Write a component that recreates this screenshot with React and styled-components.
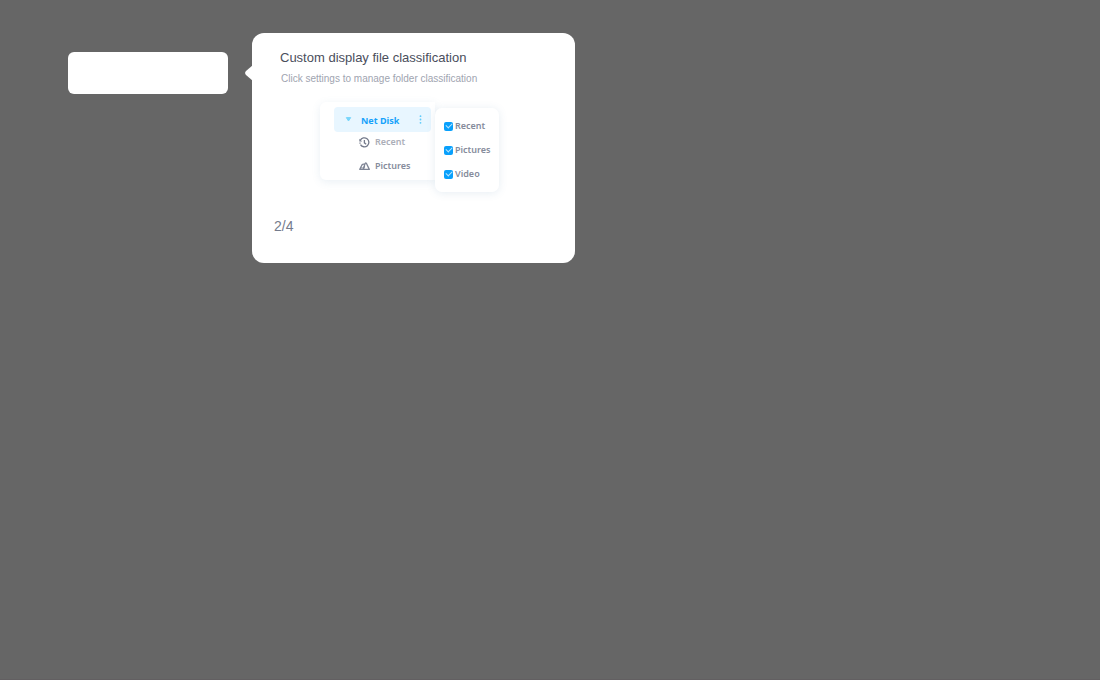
import React from "react";
import styled, { createGlobalStyle } from "styled-components";

const GlobalStyle = createGlobalStyle`
  * { box-sizing: border-box; }
  body {
    margin: 0;
    background: #666666;
    font-family: "Noto Sans", sans-serif;
  }
`;

const Overlay = styled.main`
  display: flex;
  align-items: flex-start;
  gap: 24px;
  min-height: 100vh;
  padding: 33px 24px 33px 68px;
  border-bottom: 1px solid #625f61;
`;

const Highlight = styled.div`
  flex: 0 1 160px;
  height: 42px;
  margin-top: 19px;
  border-radius: 6px;
  background: #ffffff;
`;

const Popover = styled.section`
  position: relative;
  flex: 0 1 323px;
  padding: 15px 20px 27px 22px;
  border-radius: 12px;
  background: #ffffff;
`;

const Arrow = styled.svg`
  position: absolute;
  top: 32px;
  left: -7px;
  width: 8px;
  height: 16px;
`;

const Title = styled.h1`
  margin: 0 0 0 6px;
  font: 400 13px/20px "Liberation Sans", sans-serif;
  color: #4a4e5c;
  white-space: nowrap;
`;

const Description = styled.p`
  margin: 2px 0 0 7px;
  font: 400 10px/18px "Liberation Sans", sans-serif;
  color: #a0a4b0;
  white-space: nowrap;
`;

const Preview = styled.div`
  display: flex;
  align-items: flex-start;
  margin: 14px 0 0 46px;
`;

const FolderPanel = styled.div`
  display: flex;
  flex-direction: column;
  flex: 0 0 115px;
  height: 78px;
  padding: 5px 4px 0 14px;
  border-radius: 6px 0 0 6px;
  background: #ffffff;
  box-shadow: 0 2px 8px rgba(80, 130, 170, 0.12);
`;

const FolderHeader = styled.div`
  display: flex;
  align-items: center;
  height: 25px;
  padding: 0 9px 0 11px;
  border-radius: 4px;
  background: #e8f6ff;
  color: #17a2fb;
  font-size: 9px;
  font-weight: 700;
`;

const FolderName = styled.span`
  flex: 1;
  margin-left: 9px;
  padding-top: 2px;
`;

const FolderRows = styled.div`
  display: grid;
  gap: 4px;
  padding-left: 25px;
`;

const FolderRow = styled.div`
  display: flex;
  align-items: center;
  gap: 5px;
  height: 20px;
  font-size: 9px;
  font-weight: 600;
  line-height: 12px;
  color: ${({ $muted }) => ($muted ? "#abaeb8" : "#858b9b")};
`;

const OptionMenu = styled.div`
  position: relative;
  display: grid;
  grid-auto-rows: 24px;
  height: 84px;
  flex: 0 0 64px;
  margin-top: 6px;
  padding: 6px 0 0 9px;
  border-radius: 7px;
  background: #ffffff;
  box-shadow: 0 1px 9px rgba(80, 130, 170, 0.14);
`;

const Option = styled.label`
  display: flex;
  align-items: center;
  gap: 2px;
  font-size: 9px;
  font-weight: 600;
  line-height: 12px;
  color: #858b9b;
`;

const Checkbox = styled.input`
  appearance: none;
  flex: none;
  display: grid;
  place-items: center;
  width: 9px;
  height: 9px;
  margin: 0;
  border-radius: 2px;
  background: #08a0fc;

  &:checked::before {
    content: "";
    width: 5px;
    height: 3px;
    margin-bottom: 2px;
    border: solid #b5e4ff;
    border-width: 0 0 1px 1px;
    transform: rotate(-45deg);
  }
`;

const Counter = styled.p`
  margin: 25px 0 0;
  font: 400 14px/19px "Liberation Sans", sans-serif;
  color: #747b8c;
`;

const CaretIcon = () => (
  <svg width="7" height="5" viewBox="0 0 7 5" aria-hidden="true">
    <path d="M1.3.6h4.4L3.5 4z" fill="#78d5fb" stroke="#78d5fb" strokeLinejoin="round" />
  </svg>
);

const MoreIcon = () => (
  <svg width="3" height="9" viewBox="0 0 3 9" fill="#5ecbfa" aria-hidden="true">
    <circle cx="1.5" cy="1.2" r="0.9" />
    <circle cx="1.5" cy="4.5" r="0.9" />
    <circle cx="1.5" cy="7.8" r="0.9" />
  </svg>
);

const HistoryIcon = () => (
  <svg width="11" height="11" viewBox="0 0 11 11" fill="none" stroke="#747a8b" strokeWidth="1.3" aria-hidden="true">
    <path d="M1.3 3.4A4.5 4.5 0 1 1 1.5 7.6" />
    <path d="M.3 1.7v2.8h2.8z" fill="#747a8b" stroke="none" />
    <path d="M5.4 3v2.9l1.8 1.3" />
    <path d="M.4 6.2h1.2" />
  </svg>
);

const PicturesIcon = () => (
  <svg width="11" height="11" viewBox="0 0 11 11" fill="none" stroke="#7f8595" strokeWidth="1.3" strokeLinejoin="round" aria-hidden="true">
    <path d="M4.2 8.4 6.1 2.5Q6.8 1.5 7.5 2.5L10.3 8.4z" />
    <path d="M5.8 3.4Q3.2 2.4 2.4 5L.8 8.4h3.4L5.6 5" />
    <path d="M2.2 6.9h1.5" />
  </svg>
);

const options = ["Recent", "Pictures", "Video"];

export default function App() {
  return (
    <>
      <GlobalStyle />
      <Overlay>
        <Highlight />
        <Popover>
          <Arrow viewBox="0 0 8 16" aria-hidden="true">
            <path d="M8 0v16L1 10Q-.8 8 1 6z" fill="#ffffff" />
          </Arrow>
          <Title>Custom display file classification</Title>
          <Description>Click settings to manage folder classification</Description>
          <Preview>
            <FolderPanel>
              <FolderHeader>
                <CaretIcon />
                <FolderName>Net Disk</FolderName>
                <MoreIcon />
              </FolderHeader>
              <FolderRows>
                <FolderRow $muted>
                  <HistoryIcon />
                  Recent
                </FolderRow>
                <FolderRow>
                  <PicturesIcon />
                  Pictures
                </FolderRow>
              </FolderRows>
            </FolderPanel>
            <OptionMenu>
              {options.map((name) => (
                <Option key={name}>
                  <Checkbox type="checkbox" defaultChecked />
                  {name}
                </Option>
              ))}
            </OptionMenu>
          </Preview>
          <Counter>2/4</Counter>
        </Popover>
      </Overlay>
    </>
  );
}
